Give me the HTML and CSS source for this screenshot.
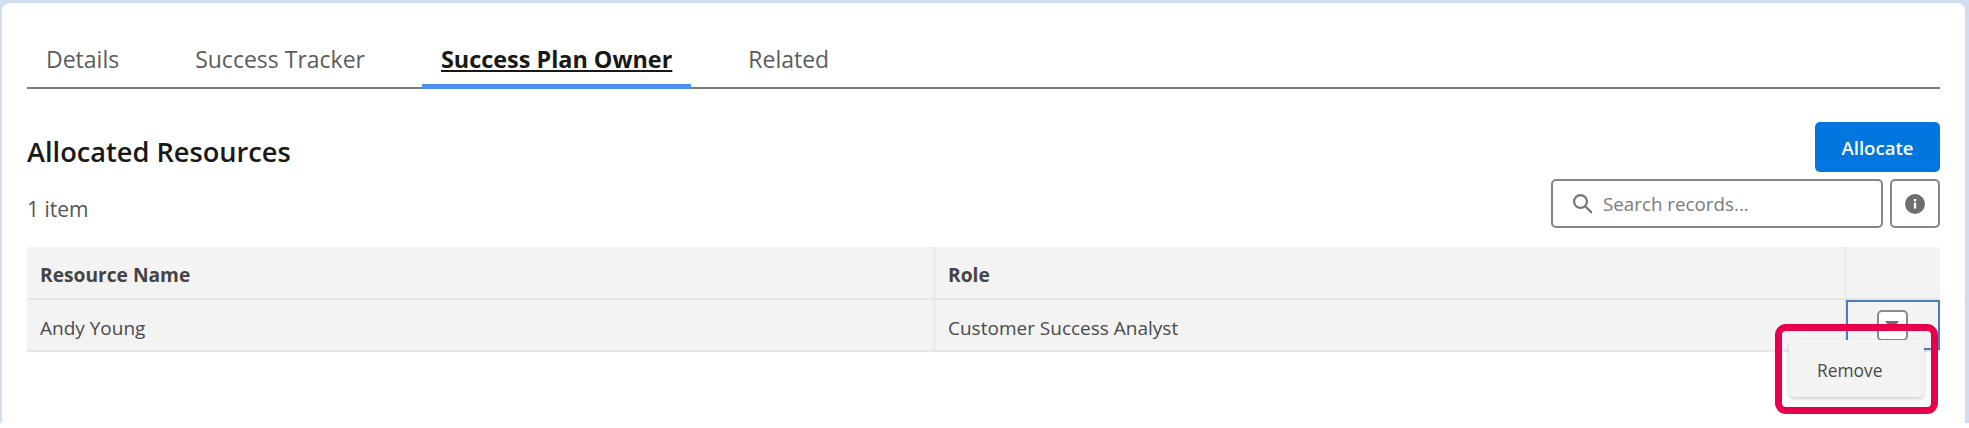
FILE: index.html
```html
<!DOCTYPE html>
<html lang="en">
<head>
  <meta charset="UTF-8" />
  <title>Allocated Resources</title>
  <link rel="stylesheet" href="styles.css">
</head>
<body>
  <div class="frame">
    <div class="card">
      <div class="tabs">
        <a class="tab">Details</a>
        <a class="tab">Success Tracker</a>
        <a class="tab active">Success Plan Owner</a>
        <a class="tab">Related</a>
      </div>

      <div class="title-row">
        <h2>Allocated Resources</h2>
        <button class="allocate">Allocate</button>
      </div>

      <div class="tool-row">
        <span class="count">1 item</span>
        <div class="search">
          <svg width="21" height="21" viewBox="0 0 21 21" fill="none" stroke="#747474" stroke-width="2.2">
            <circle cx="8.5" cy="8.5" r="6.4" />
            <path d="M13.2 13.2l6 6" stroke-linecap="round" />
          </svg>
          <span>Search records...</span>
        </div>
        <div class="info">
          <svg width="20" height="20" viewBox="0 0 20 20">
            <circle cx="10" cy="10" r="10" fill="#706e6b" />
            <rect x="8.8" y="8.6" width="2.4" height="6" fill="#fff" />
            <rect x="8.8" y="5" width="2.4" height="2.3" fill="#fff" />
          </svg>
        </div>
      </div>

      <div class="table">
        <div class="cell head">Resource Name</div>
        <div class="cell head">Role</div>
        <div class="cell head last"></div>
        <div class="cell">Andy Young</div>
        <div class="cell">Customer Success Analyst</div>
        <div class="cell-wrap">
          <div class="action">
            <div class="drop"><i class="tri"></i></div>
            <div class="menu">Remove</div>
            <div class="callout"></div>
          </div>
        </div>
      </div>
    </div>
  </div>
</body>
</html>
```

FILE: styles.css
```css
* {
  box-sizing: border-box;
}
body {
  margin: 0;
  height: 428px;
  overflow: hidden;
  background: #fff;
  font-family: "Open Sans", Arial, sans-serif;
}
.frame {
  height: 423px;
  padding: 3px 4px 0 2px;
  background: #cfdff1;
}
.card {
  height: 420px;
  background: #fff;
  border-radius: 8px 8px 0 0;
  box-shadow: 1px 0 0 #d9d9d9;
  padding: 0 25px;
}
.tabs {
  display: flex;
  gap: 38px;
  height: 86px;
  align-items: flex-end;
  border-bottom: 2px solid #7b7b7b;
}
.tab {
  height: 54px;
  margin-bottom: -2px;
  padding: 10px 19px 0;
  font-size: 23px;
  line-height: 28px;
  color: #5c5c5c;
  white-space: nowrap;
}
.tab.active {
  border-bottom: 5px solid #4a90f5;
  font-size: 23.4px;
  font-weight: 700;
  color: #181818;
  text-decoration: underline;
}
.title-row {
  display: flex;
  justify-content: space-between;
  align-items: center;
  margin-top: 33px;
  height: 50px;
}
h2 {
  margin: 0;
  padding-top: 8px;
  font-size: 27.2px;
  font-weight: 600;
  color: #181818;
}
.allocate {
  width: 125px;
  height: 50px;
  border: 0;
  border-radius: 5px;
  background: #0176de;
  color: #fff;
  font-family: inherit;
  font-size: 18.6px;
  font-weight: 600;
}
.tool-row {
  display: flex;
  align-items: center;
  gap: 7px;
  margin-top: 7px;
  height: 49px;
}
.count {
  flex: 1;
  padding-top: 10px;
  font-size: 21px;
  color: #555;
}
.search {
  display: flex;
  align-items: center;
  gap: 10px;
  width: 332px;
  height: 49px;
  padding-left: 19px;
  border: 2px solid #868686;
  border-radius: 5px;
  font-size: 18.8px;
  color: #7a7a7a;
}
.info {
  display: flex;
  align-items: center;
  justify-content: center;
  width: 50px;
  height: 49px;
  border: 2px solid #868686;
  border-radius: 5px;
}
.table {
  display: grid;
  grid-template-columns: 908px 911px 94px;
  grid-template-rows: 53px 52px;
  margin-top: 19px;
  background: #f3f3f3;
}
.cell {
  display: flex;
  align-items: center;
  padding: 5px 0 0 13px;
  border-right: 1px solid #e2e2e2;
  border-bottom: 2px solid #e6e6e6;
  font-size: 19px;
  color: #4a4a4a;
}
.cell.head {
  padding-top: 3px;
  font-size: 19.2px;
  font-weight: 700;
  color: #444;
}
.cell.last {
  border-right: 0;
}
.cell-wrap {
  border-bottom: 2px solid #e6e6e6;
}
.action {
  position: relative;
  height: 50px;
  border: 2px solid #4a7fb5;
}
.drop {
  position: absolute;
  left: 29px;
  top: 8px;
  width: 31px;
  height: 31px;
  border: 2px solid #8a8a8a;
  border-radius: 5px;
  background: #fff;
}
.tri {
  position: absolute;
  left: 6px;
  top: 9px;
  border-left: 7px solid transparent;
  border-right: 7px solid transparent;
  border-top: 9px solid #706e6b;
}
.menu {
  position: absolute;
  left: -59px;
  top: 38px;
  width: 135px;
  height: 57px;
  padding: 4px 0 0 28px;
  border-radius: 5px;
  background: #f3f3f3;
  box-shadow: 0 2px 4px rgba(0, 0, 0, 0.2);
  font-size: 17.4px;
  line-height: 53px;
  color: #4a4a4a;
}
.callout {
  position: absolute;
  left: -73px;
  top: 22px;
  width: 163px;
  height: 90px;
  border: 7px solid #e6004c;
  border-radius: 11px;
}
```
